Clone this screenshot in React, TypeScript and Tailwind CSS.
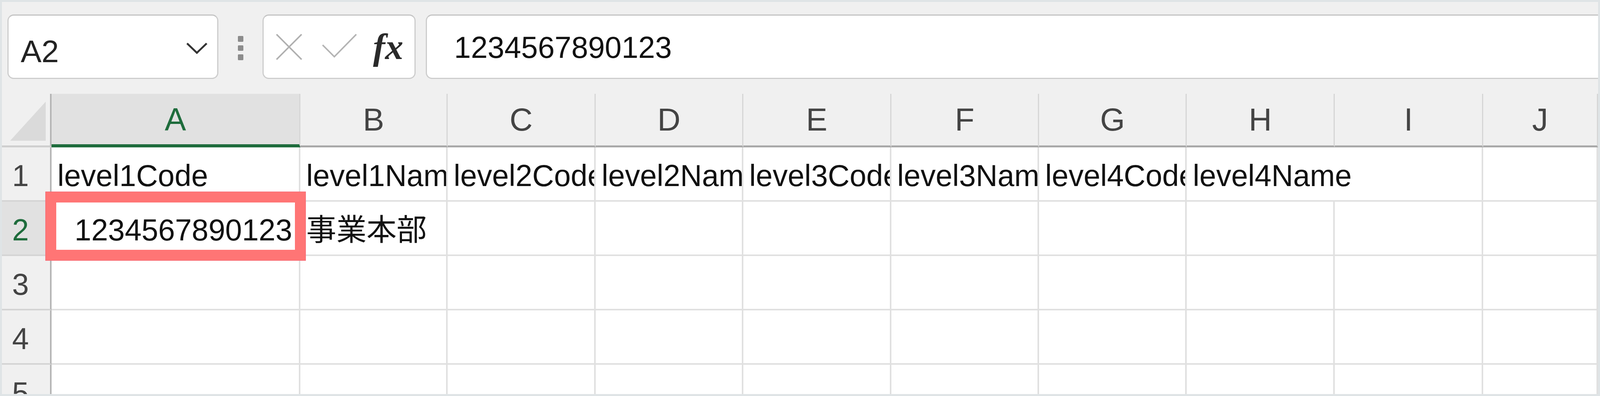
import React from 'react'

const font = "font-['Liberation_Sans','Noto_Sans_CJK_JP',sans-serif]"

// widths are shares of the 4400px sheet, so the grid keeps its proportions
const rowHeaderWidth = 'w-[3.11%]'
const columns = [
    { label: 'A', width: 'w-[15.59%]' },
    { label: 'B', width: 'w-[9.23%]' },
    { label: 'C', width: 'w-[9.27%]' },
    { label: 'D', width: 'w-[9.25%]' },
    { label: 'E', width: 'w-[9.27%]' },
    { label: 'F', width: 'w-[9.27%]' },
    { label: 'G', width: 'w-[9.25%]' },
    { label: 'H', width: 'w-[9.27%]' },
    { label: 'I', width: 'w-[9.3%]' },
    { label: 'J', width: 'flex-1' },
]

// cell values per row, '' means empty
const rows: string[][] = [
    ['level1Code', 'level1Name', 'level2Code', 'level2Name', 'level3Code', 'level3Name', 'level4Code', 'level4Name', '', ''],
    ['1234567890123', '事業本部', '', '', '', '', '', '', '', ''],
    ['', '', '', '', '', '', '', '', '', ''],
    ['', '', '', '', '', '', '', '', '', ''],
    ['', '', '', '', '', '', '', '', '', ''],
]

// cells whose text runs over into the empty neighbour on the right
const spillCells = new Set(['0-7'])

function FormulaBar() {
    return (
        <div className="h-[235px] shrink-0 flex items-start pt-[32px] pl-[0.34%]">
            {/* name box */}
            <div className="w-[13.27%] h-[165px] shrink-0 flex items-center bg-white border-[3px] border-[#cdcdcd] border-t-[#c4c4c4] rounded-[16px] pl-[31px] pr-[24px]">
                <span className="text-[1.95vw] leading-none text-[#222] pt-[24px]">A2</span>
                <svg className="ml-auto mt-[8px]" width="56" height="31" viewBox="0 0 58 32">
                    <path d="M3 3 L29 28 L55 3" fill="none" stroke="#333" strokeWidth="5" />
                </svg>
            </div>

            {/* vertical grip dots */}
            <div className="ml-[1.23%] mt-[55px] flex flex-col gap-[9px] shrink-0">
                <div className="w-[14px] h-[15px] bg-[#8c8c8c] rounded-[2px]" />
                <div className="w-[14px] h-[14px] bg-[#8c8c8c] rounded-[2px]" />
                <div className="w-[14px] h-[15px] bg-[#8c8c8c] rounded-[2px]" />
            </div>

            {/* cancel / enter / fx */}
            <div className="ml-[1.2%] w-[9.61%] h-[165px] shrink-0 flex items-center bg-white border-[3px] border-[#cdcdcd] border-t-[#c4c4c4] rounded-[16px]">
                <svg className="ml-[7.9%] shrink-0" width="68" height="68" viewBox="0 0 72 72">
                    <path d="M2 2 L70 70 M70 2 L2 70" fill="none" stroke="#b0b0b0" strokeWidth="4" />
                </svg>
                <svg className="ml-[13.2%] -mt-[6px] shrink-0" width="90" height="62" viewBox="0 0 96 66">
                    <path d="M2 31 L34 63 L94 2" fill="none" stroke="#b4b4b4" strokeWidth="4" />
                </svg>
                <span className="ml-[10.5%] font-['Liberation_Serif',serif] italic font-bold text-[2.27vw] leading-none text-[#2a2a2a]">
                    fx
                </span>
            </div>

            {/* formula input */}
            <div className="ml-[0.64%] flex-1 h-[165px] flex items-center bg-white border-[3px] border-r-0 border-[#cdcdcd] border-t-[#c4c4c4] rounded-l-[16px] pl-[70px]">
                <span className="text-[1.882vw] leading-none text-[#111] pt-[4px]">1234567890123</span>
            </div>
        </div>
    )
}

function HeaderRow() {
    return (
        <div className="h-[137px] shrink-0 flex">
            <div className={`${rowHeaderWidth} shrink-0 flex justify-end border-r-[4px] border-r-[#b5b5b5] border-b-[5px] border-b-[#cfcfcf]`}>
                <svg className="mr-[10px] mt-[20px]" width="92" height="100" viewBox="0 0 98 100" preserveAspectRatio="none">
                    <polygon points="97,0 97,100 0,100" fill="#dadada" />
                </svg>
            </div>
            {columns.map((col, i) => (
                <div
                    key={col.label}
                    className={`${col.width} shrink-0 flex items-center justify-center text-[1.995vw] leading-none border-r-[3px] border-r-[#d6d6d6] ${
                        i === 0
                            ? 'bg-[#e1e1e1] text-[#1e6c3c] border-b-[8px] border-b-[#1e6c3c]'
                            : 'text-[#444] border-b-[5px] border-b-[#a9a9a9]'
                    }`}
                >
                    {col.label}
                </div>
            ))}
        </div>
    )
}

function DataRow({ values, index }: { values: string[]; index: number }) {
    const selected = index === 1
    const isLast = index === rows.length - 1
    return (
        <div className={`${isLast ? 'flex-1' : 'h-[139px] shrink-0'} flex`}>
            <div
                className={`${rowHeaderWidth} shrink-0 pl-[26px] pt-[31px] text-[1.882vw] leading-[83px] border-r-[4px] border-r-[#b5b5b5] border-b-[4px] border-b-[#d4d4d4] ${
                    selected ? 'bg-[#e1e1e1] text-[#1e6c3c]' : 'bg-[#f0f0f0] text-[#444]'
                }`}
            >
                {index + 1}
            </div>
            {columns.map((col, c) => {
                const value = values[c]
                const isNumber = /^\d+$/.test(value)
                const spills = spillCells.has(`${index}-${c}`)
                const active = selected && c === 0
                return (
                    <div
                        key={col.label}
                        className={`${col.width} shrink-0 bg-white pt-[31px] pl-[15px] pr-[17px] text-[1.882vw] leading-[83px] text-[#111] whitespace-nowrap border-b-[4px] border-b-[#e0e0e0] ${
                            spills ? 'relative z-[1] overflow-visible' : 'border-r-[4px] border-r-[#e0e0e0]'
                        } ${spills || active ? '' : 'overflow-hidden'} ${active ? 'relative' : ''} ${
                            isNumber ? 'text-right' : 'text-left'
                        }`}
                    >
                        {value}
                        {active && (
                            <div className="absolute -left-[15px] -top-[25px] -right-[17px] -bottom-[15px] border-[27px] border-[#ff7575] shadow-[0_0_0_1px_#f26a78] z-10" />
                        )}
                    </div>
                )
            })}
        </div>
    )
}

export default function App() {
    return (
        <div
            className={`${font} w-full h-[1013px] box-border border-[5px] border-[#dfe4e6] bg-[#f0f0f0] flex flex-col overflow-hidden`}
        >
            <FormulaBar />
            <HeaderRow />
            {rows.map((values, i) => (
                <DataRow key={i} values={values} index={i} />
            ))}
        </div>
    )
}
